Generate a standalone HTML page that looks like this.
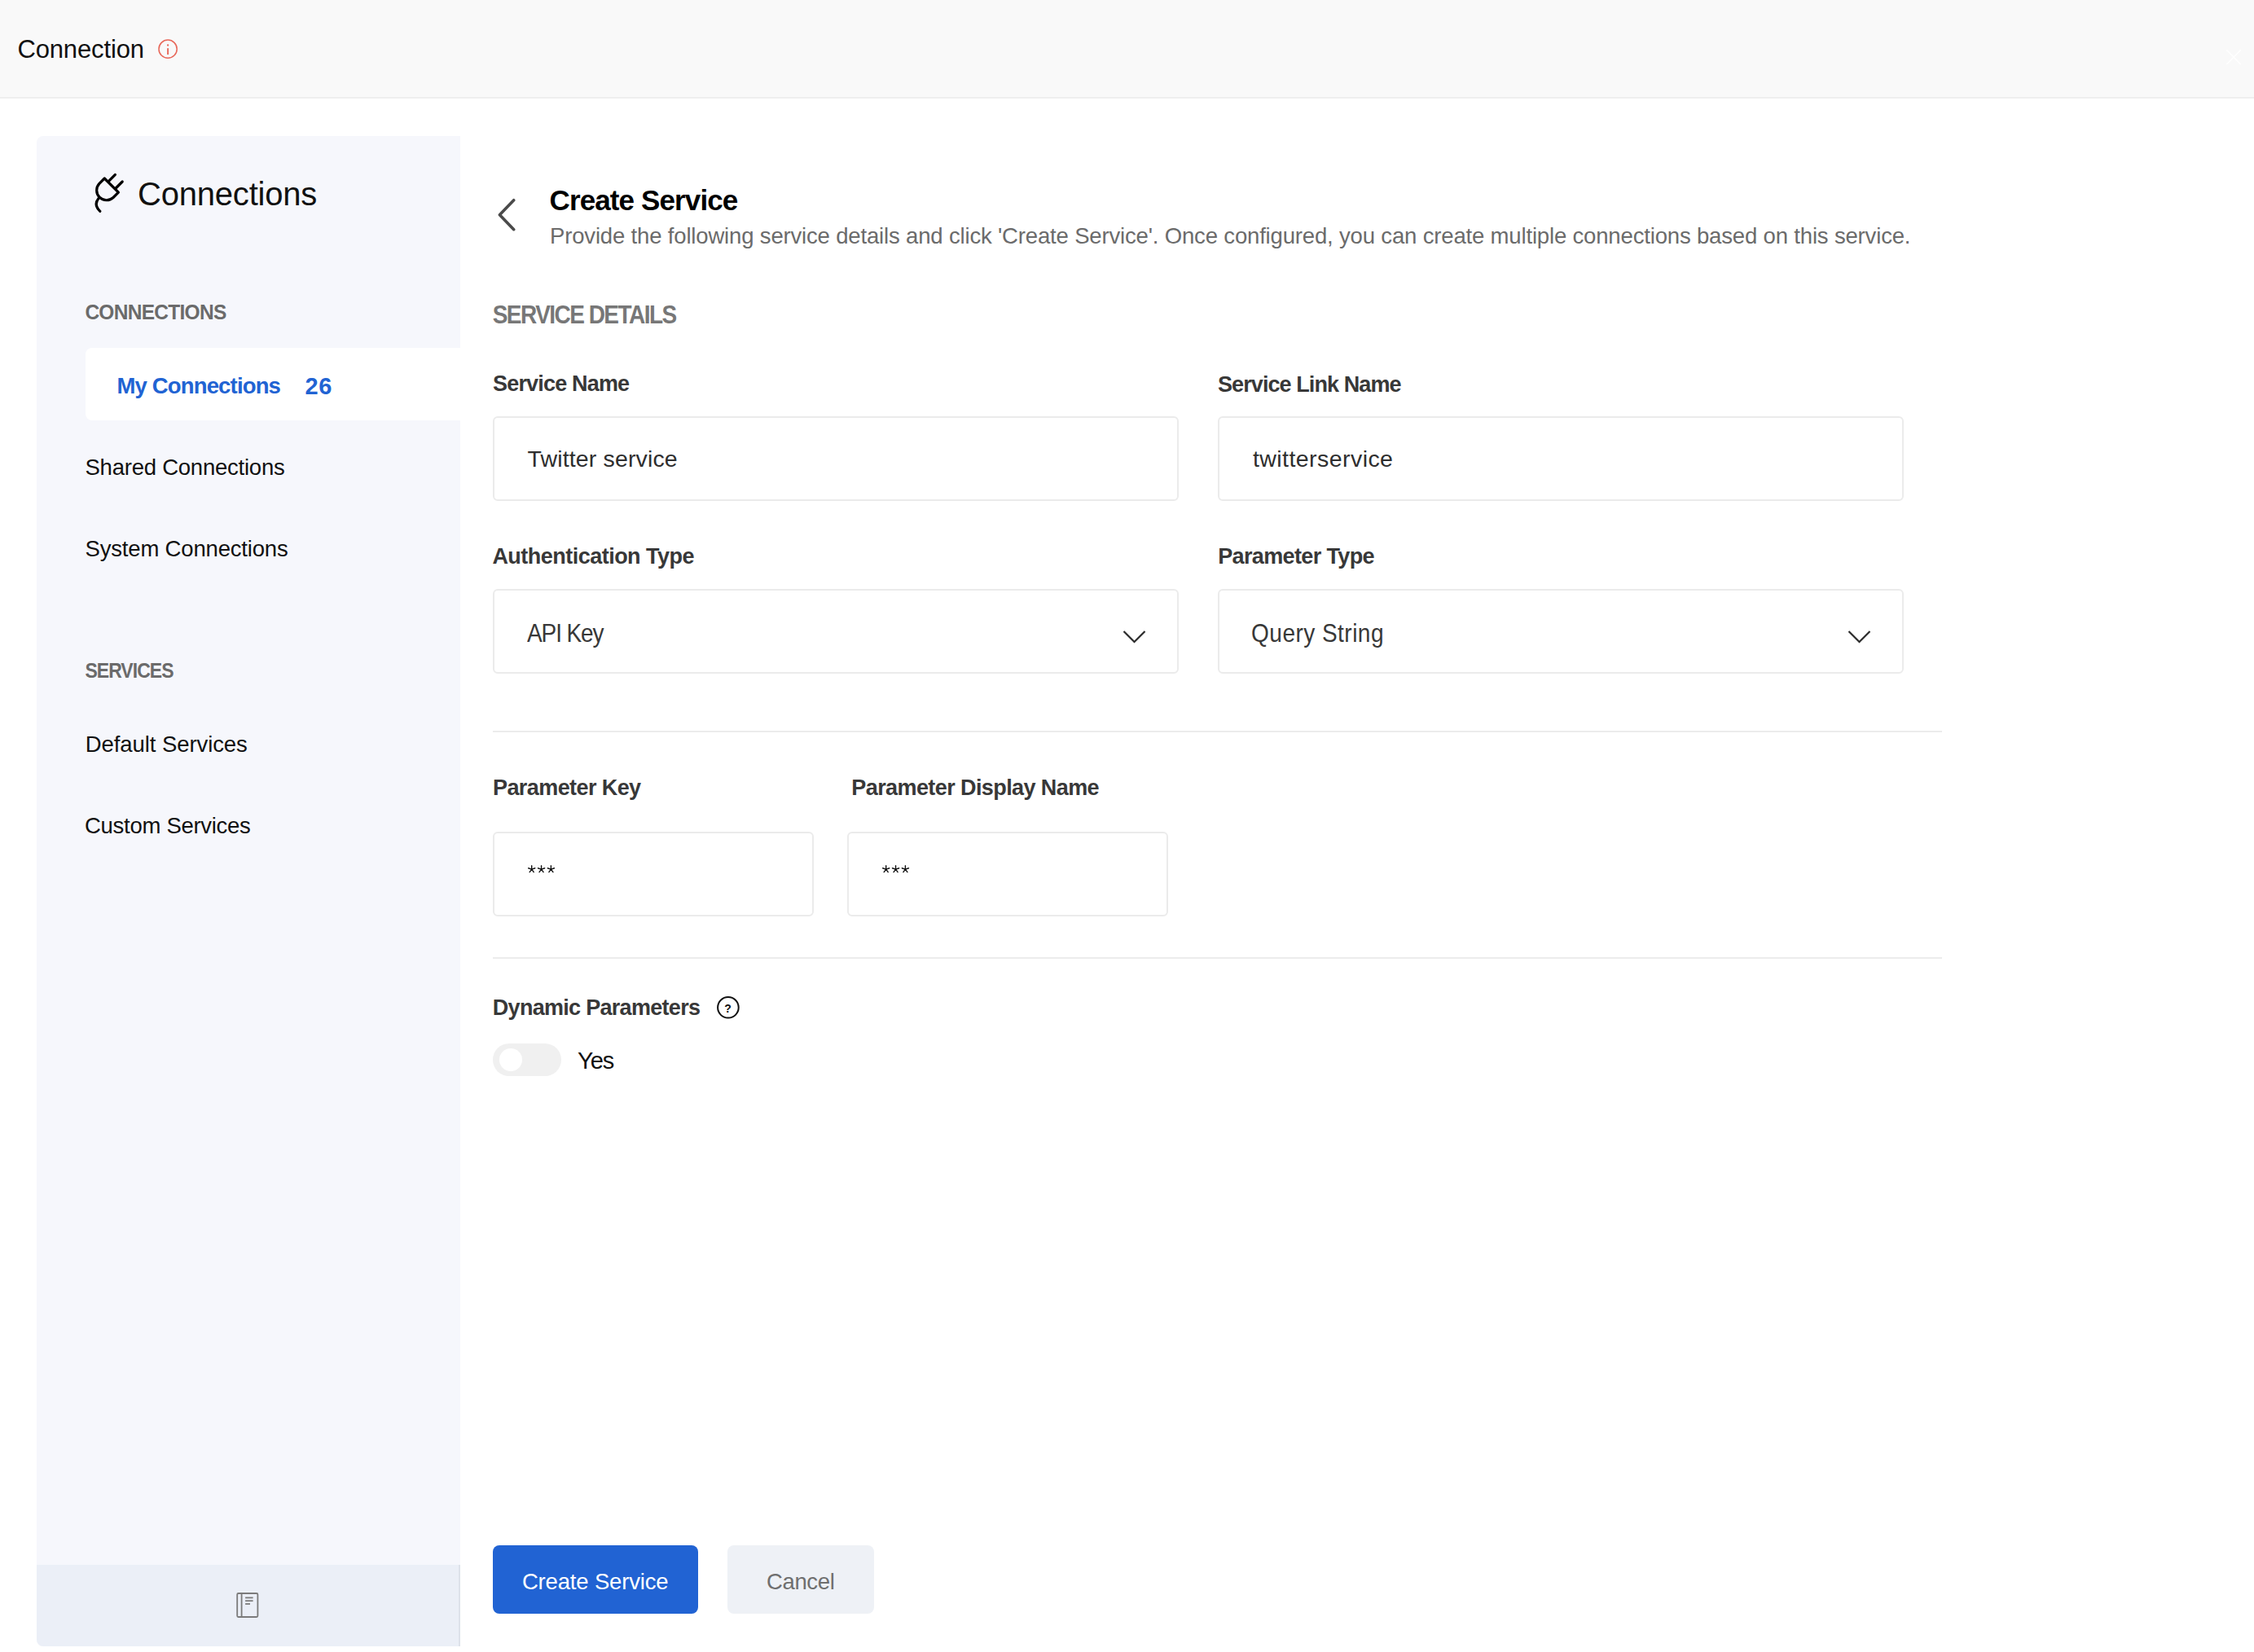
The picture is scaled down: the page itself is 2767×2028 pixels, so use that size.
<!DOCTYPE html>
<html>
<head>
<meta charset="utf-8">
<style>
html,body{margin:0;padding:0;width:2767px;height:2028px;overflow:hidden;background:#fff;}
body{position:relative;font-family:"Liberation Sans",sans-serif;}
.a{position:absolute;white-space:nowrap;}
.hdr{left:0;top:0;width:2767px;height:119px;background:#f9f9f9;border-bottom:2px solid #efefef;}
.sb{left:45px;top:167px;width:520px;height:1854px;background:#f6f7fc;border-radius:8px 0 0 8px;overflow:hidden;}
.sbf{left:45px;top:1921px;width:518px;height:100px;background:#ebeff7;border-right:2px solid #dde2ea;border-radius:0 0 0 8px;}
.act{left:105px;top:427px;width:460px;height:89px;background:#fff;border-radius:8px 0 0 8px;}
.inp{box-sizing:border-box;border:2px solid #ebebeb;border-radius:6px;background:#fff;}
.hr{height:2px;background:#ececec;}
.t{line-height:1;}
</style>
</head>
<body>
<div class="a hdr"></div>
<div class="a sb"></div>
<div class="a act"></div>
<div class="a sbf"></div>

<!-- inputs -->
<div class="a inp" style="left:605px;top:511px;width:842px;height:104px;"></div>
<div class="a inp" style="left:1495px;top:511px;width:842px;height:104px;"></div>
<div class="a inp" style="left:605px;top:723px;width:842px;height:104px;"></div>
<div class="a inp" style="left:1495px;top:723px;width:842px;height:104px;"></div>
<div class="a hr" style="left:605px;top:897px;width:1779px;"></div>
<div class="a inp" style="left:605px;top:1021px;width:394px;height:104px;"></div>
<div class="a inp" style="left:1040px;top:1021px;width:394px;height:104px;"></div>
<div class="a hr" style="left:605px;top:1175px;width:1779px;"></div>

<!-- toggle -->
<div class="a" style="left:605px;top:1281px;width:84px;height:40px;border-radius:20px;background:#f0f0f0;"></div>
<div class="a" style="left:613px;top:1287px;width:28px;height:28px;border-radius:14px;background:#fff;"></div>

<!-- buttons -->
<div class="a" style="left:605px;top:1897px;width:252px;height:84px;border-radius:8px;background:#2163d3;"></div>
<div class="a" style="left:893px;top:1897px;width:180px;height:84px;border-radius:8px;background:#eef1f6;"></div>

<!-- texts -->
<div id="t1" class="a t" style="left:21.40px;top:45.01px;font-size:31px;color:#111111;letter-spacing:-0.133px;">Connection</div>
<div id="t2" class="a t" style="left:169.00px;top:217.50px;font-size:40px;color:#111111;letter-spacing:-0.200px;">Connections</div>
<div id="t3" class="a t" style="left:104.40px;top:371.50px;font-size:24.5px;color:#6b6b6b;transform:scaleY(1.06);transform-origin:0 20.00px;font-weight:bold;letter-spacing:-0.720px;">CONNECTIONS</div>
<div id="t4" class="a t" style="left:143.50px;top:460.20px;font-size:27.5px;color:#2163d3;font-weight:bold;letter-spacing:-0.846px;">My Connections</div>
<div id="t5" class="a t" style="left:374.60px;top:459.81px;font-size:29px;color:#2163d3;font-weight:bold;letter-spacing:0.600px;">26</div>
<div id="t6" class="a t" style="left:104.50px;top:560.00px;font-size:27.5px;color:#111111;letter-spacing:-0.235px;">Shared Connections</div>
<div id="t7" class="a t" style="left:104.50px;top:660.00px;font-size:27.5px;color:#111111;letter-spacing:-0.176px;">System Connections</div>
<div id="t8" class="a t" style="left:104.40px;top:812.61px;font-size:23px;color:#6b6b6b;transform:scaleY(1.12);transform-origin:0 18.99px;font-weight:bold;letter-spacing:-0.971px;">SERVICES</div>
<div id="t9" class="a t" style="left:104.80px;top:900.00px;font-size:27.5px;color:#111111;letter-spacing:-0.080px;">Default Services</div>
<div id="t10" class="a t" style="left:104.00px;top:1000.00px;font-size:27.5px;color:#111111;letter-spacing:-0.286px;">Custom Services</div>
<div id="t11" class="a t" style="left:674.50px;top:227.80px;font-size:35px;color:#000000;font-weight:bold;letter-spacing:-0.877px;">Create Service</div>
<div id="t12" class="a t" style="left:675.00px;top:276.00px;font-size:27.5px;color:#6b6b6b;letter-spacing:-0.164px;">Provide the following service details and click 'Create Service'. Once configured, you can create multiple connections based on this service.</div>
<div id="t13" class="a t" style="left:604.70px;top:373.91px;font-size:28px;color:#777777;transform:scaleY(1.1);transform-origin:0 22.99px;font-weight:bold;letter-spacing:-1.529px;">SERVICE DETAILS</div>
<div id="t14" class="a t" style="left:605.00px;top:458.31px;font-size:27px;color:#383838;font-weight:bold;letter-spacing:-0.818px;">Service Name</div>
<div id="t15" class="a t" style="left:1495.00px;top:458.61px;font-size:27px;color:#383838;font-weight:bold;letter-spacing:-0.912px;">Service Link Name</div>
<div id="t16" class="a t" style="left:647.50px;top:549.01px;font-size:28.5px;color:#2e2e2e;letter-spacing:0.143px;">Twitter service</div>
<div id="t17" class="a t" style="left:1537.90px;top:549.21px;font-size:28.5px;color:#2e2e2e;letter-spacing:0.446px;">twitterservice</div>
<div id="t18" class="a t" style="left:604.40px;top:670.31px;font-size:27px;color:#383838;font-weight:bold;letter-spacing:-0.522px;">Authentication Type</div>
<div id="t19" class="a t" style="left:1495.20px;top:670.31px;font-size:27px;color:#383838;font-weight:bold;letter-spacing:-0.631px;">Parameter Type</div>
<div id="t20" class="a t" style="left:647.00px;top:764.51px;font-size:28px;color:#383838;transform:scaleY(1.09);transform-origin:0 22.99px;letter-spacing:-1.100px;">API Key</div>
<div id="t21" class="a t" style="left:1536.10px;top:764.60px;font-size:28px;color:#383838;transform:scaleY(1.09);transform-origin:0 23.00px;letter-spacing:0.473px;">Query String</div>
<div id="t22" class="a t" style="left:605.00px;top:953.72px;font-size:27px;color:#383838;font-weight:bold;letter-spacing:-0.583px;">Parameter Key</div>
<div id="t23" class="a t" style="left:1045.30px;top:953.50px;font-size:27px;color:#383838;font-weight:bold;letter-spacing:-0.590px;">Parameter Display Name</div>
<div id="t26" class="a t" style="left:604.80px;top:1223.72px;font-size:27px;color:#383838;font-weight:bold;letter-spacing:-0.706px;">Dynamic Parameters</div>
<div id="t27" class="a t" style="left:709.00px;top:1287.81px;font-size:29px;color:#111111;letter-spacing:-1.000px;">Yes</div>
<div id="t28" class="a t" style="left:640.90px;top:1927.50px;font-size:27.5px;color:#ffffff;letter-spacing:-0.169px;">Create Service</div>
<div id="t29" class="a t" style="left:941.00px;top:1927.50px;font-size:27.5px;color:#6f6f6f;letter-spacing:-0.360px;">Cancel</div>
<!-- icons overlay -->
<svg class="a" style="left:0;top:0;" width="2767" height="2028" viewBox="0 0 2767 2028" fill="none">
  <!-- header info -->
  <circle cx="206.1" cy="60.2" r="11.1" stroke="#e8685a" stroke-width="1.5"/>
  <circle cx="206.1" cy="55.5" r="1.15" fill="#e8685a"/>
  <line x1="206.1" y1="59.2" x2="206.1" y2="67" stroke="#e8685a" stroke-width="1.9"/>
  <!-- close x -->
  <path d="M2733.3 61.3 L2750.8 79 M2750.8 61.3 L2733.3 79" stroke="#fff" stroke-width="1.5"/>
  <!-- plug -->
  <g stroke="#000" stroke-width="3.2" stroke-linecap="round" stroke-linejoin="round">
    <path d="M128.3 219 L145.4 236.1 L139 242.5 A12.1 12.1 0 0 1 121.9 225.4 Z"/>
    <path d="M133 222.8 L141.4 214.4 M141.7 231.5 L150.2 223"/>
    <path d="M121 243.5 Q114.5 251.5 122.8 259.3"/>
  </g>
  <!-- back chevron -->
  <path d="M630.7 245.7 L613.4 263.7 L630.7 281.7" stroke="#4a4a4a" stroke-width="3.6" stroke-linecap="round" stroke-linejoin="round"/>
  <!-- select chevrons -->
  <path d="M1379.5 775 L1392.5 788 L1405.5 775" stroke="#2a2a2a" stroke-width="2.2"/>
  <path d="M2269.5 775 L2282.5 788 L2295.5 775" stroke="#2a2a2a" stroke-width="2.2"/>
  <!-- question -->
  <circle cx="893.9" cy="1236.8" r="12.8" stroke="#111" stroke-width="2"/>
  <!-- stars -->
  <path d="M652.70 1067.10L652.70 1062.80M652.70 1067.10L656.79 1065.77M652.70 1067.10L655.23 1070.58M652.70 1067.10L650.17 1070.58M652.70 1067.10L648.61 1065.77M664.55 1067.10L664.55 1062.80M664.55 1067.10L668.64 1065.77M664.55 1067.10L667.08 1070.58M664.55 1067.10L662.02 1070.58M664.55 1067.10L660.46 1065.77M676.40 1067.10L676.40 1062.80M676.40 1067.10L680.49 1065.77M676.40 1067.10L678.93 1070.58M676.40 1067.10L673.87 1070.58M676.40 1067.10L672.31 1065.77M1087.70 1067.10L1087.70 1062.80M1087.70 1067.10L1091.79 1065.77M1087.70 1067.10L1090.23 1070.58M1087.70 1067.10L1085.17 1070.58M1087.70 1067.10L1083.61 1065.77M1099.55 1067.10L1099.55 1062.80M1099.55 1067.10L1103.64 1065.77M1099.55 1067.10L1102.08 1070.58M1099.55 1067.10L1097.02 1070.58M1099.55 1067.10L1095.46 1065.77M1111.40 1067.10L1111.40 1062.80M1111.40 1067.10L1115.49 1065.77M1111.40 1067.10L1113.93 1070.58M1111.40 1067.10L1108.87 1070.58M1111.40 1067.10L1107.31 1065.77" stroke="#111" stroke-width="1.4" stroke-linecap="round"/>
  <!-- book -->
  <g stroke="#7b7b7b" stroke-width="1.8">
    <rect x="291.2" y="1956" width="25.2" height="29" rx="1.5"/>
    <line x1="296.6" y1="1956" x2="296.6" y2="1985"/>
    <line x1="301.1" y1="1961.4" x2="310.6" y2="1961.4"/>
    <line x1="301.1" y1="1965.2" x2="310.6" y2="1965.2"/>
    <line x1="301.1" y1="1969" x2="307" y2="1969"/>
  </g>
</svg>
<div class="a" style="left:889.3px;top:1231px;font-size:14px;font-weight:bold;color:#111;line-height:1;">?</div>
</body>
</html>
